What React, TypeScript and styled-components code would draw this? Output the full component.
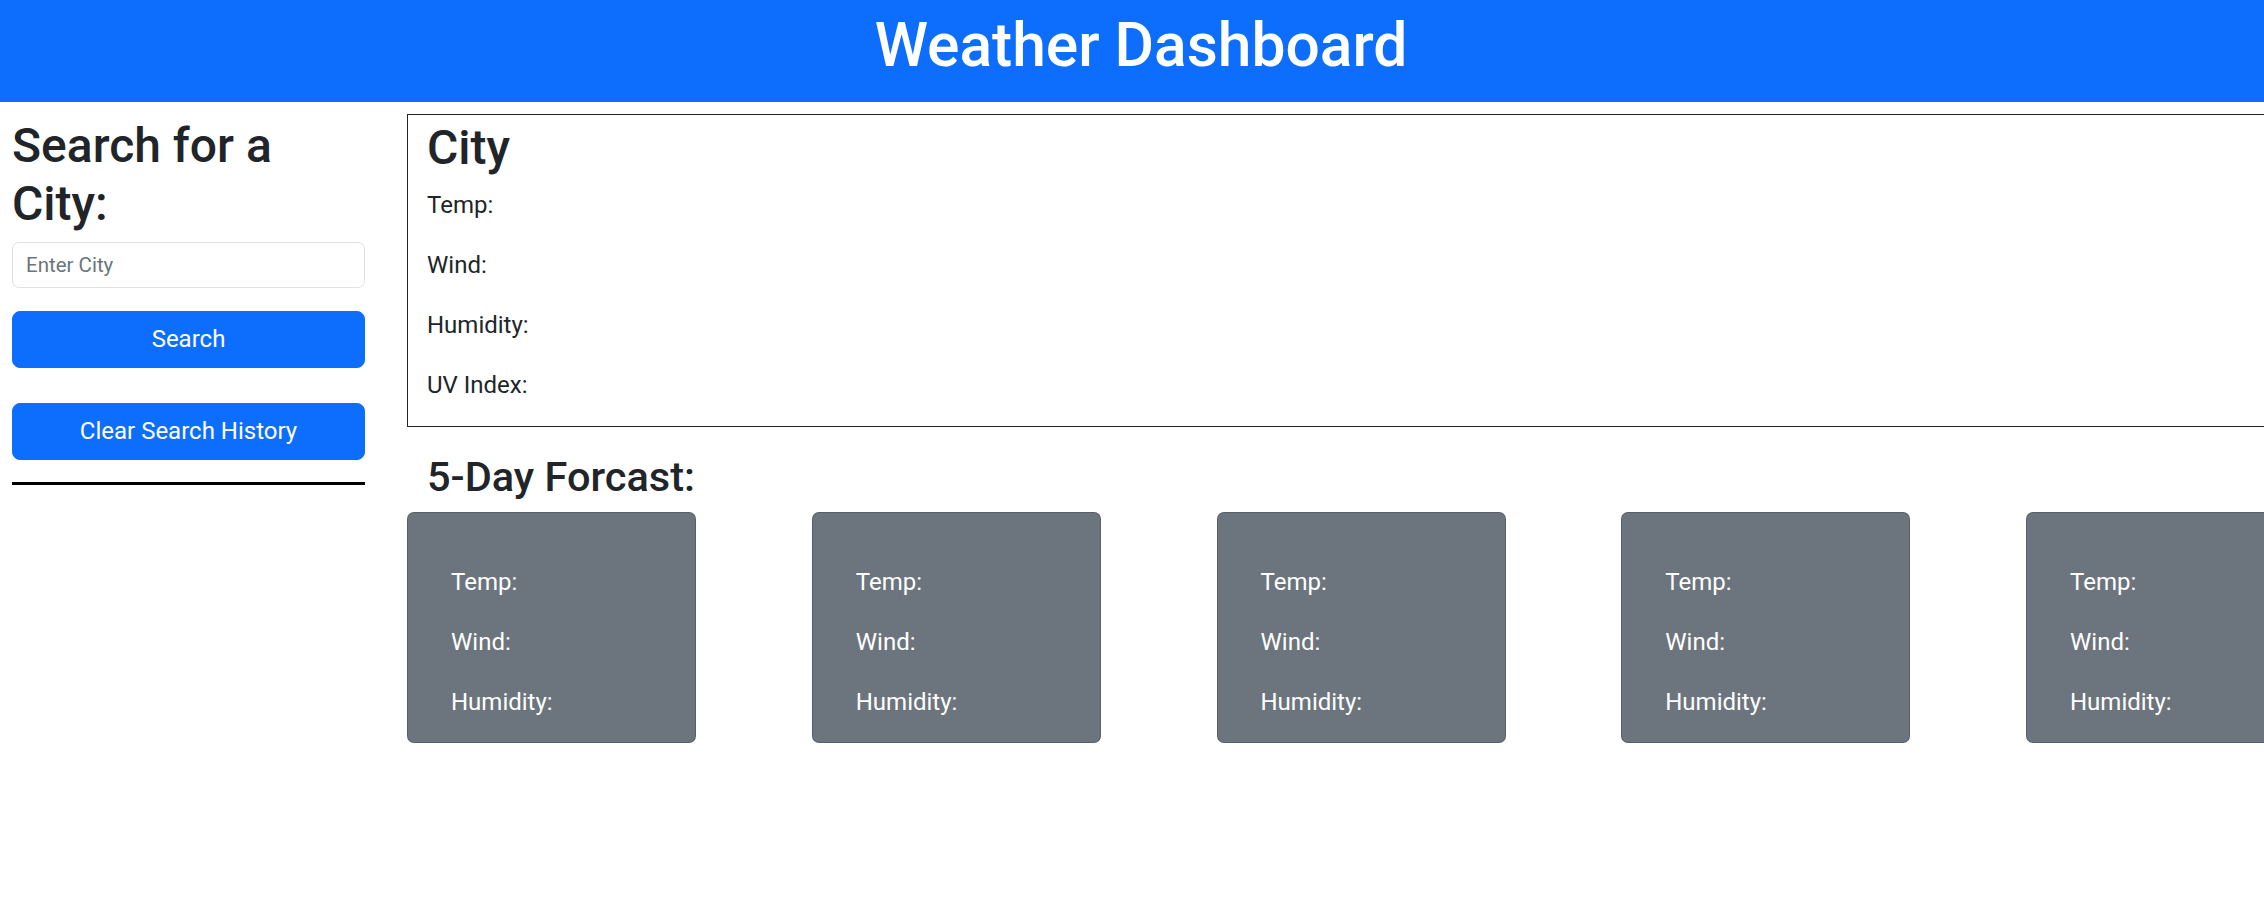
import React from "react";
import styled, { createGlobalStyle } from "styled-components";

const GlobalStyle = createGlobalStyle`
  html, body {
    margin: 0;
    padding: 0;
    overflow-x: hidden;
    background: #ffffff;
  }
  body {
    font-family: Roboto, "Noto Sans", "Liberation Sans", sans-serif;
    color: #212529;
  }
  * { box-sizing: border-box; }
`;

const Header = styled.header`
  background: #0d6efd;
  height: 102px;
  display: flex;
  justify-content: center;
  padding: 11px 0 0 18px;
`;

const Title = styled.h1`
  margin: 0;
  color: #ffffff;
  font-size: 60.5px;
  line-height: 70px;
  font-weight: 500;
`;

const Content = styled.div`
  display: flex;
  align-items: flex-start;
  padding-left: 12px;
`;

const Sidebar = styled.aside`
  width: 353px;
  flex: none;
  display: flex;
  flex-direction: column;
  padding-top: 15px;
`;

const SideHeading = styled.h1`
  margin: 0 0 9.6px;
  font-size: 48px;
  line-height: 57.6px;
  font-weight: 500;
`;

const CityInput = styled.input`
  height: 46px;
  width: 100%;
  border: 1px solid #dee2e6;
  border-radius: 7px;
  padding: 0 13px;
  font-family: inherit;
  font-size: 20.5px;
  color: #212529;
  &::placeholder { color: #6c757d; }
`;

const ActionButton = styled.button<{ $top: number }>`
  margin-top: ${(p) => p.$top}px;
  height: 57px;
  width: 100%;
  border: 1px solid #0d6efd;
  border-radius: 8px;
  background: #0d6efd;
  color: #ffffff;
  font-family: inherit;
  font-size: 24px;
  font-weight: 400;
  line-height: 36px;
`;

const Divider = styled.hr`
  margin: 22px 0 0;
  border: none;
  border-top: 3px solid #000000;
  opacity: 1;
`;

const Main = styled.main`
  flex: none;
  width: 1950px;
  margin-left: 42px;
  padding-top: 12px;
`;

const CurrentBox = styled.section`
  border: 1px solid #212529;
  padding: 4px 19px 0;
  height: 313px;
`;

const CityHeading = styled.h1`
  margin: 0 0 10px;
  font-size: 48px;
  line-height: 57.6px;
  font-weight: 500;
`;

const Stat = styled.p<{ $light?: boolean }>`
  margin: 0 0 24px;
  font-size: 24px;
  line-height: 36px;
  color: ${(p) => (p.$light ? "#ffffff" : "#212529")};
`;

const ForecastHeading = styled.h2`
  margin: 26px 0 12px;
  padding-left: 20px;
  font-size: 41.5px;
  line-height: 47px;
  font-weight: 500;
`;

const CardRow = styled.div`
  display: flex;
  gap: 115.75px;
`;

const Card = styled.div`
  flex: none;
  width: 289px;
  height: 231px;
  background: #6c757d;
  border: 1px solid rgba(0, 0, 0, 0.175);
  border-radius: 7px;
  padding: 51px 0 0 43px;
`;

const stats = ["Temp:", "Wind:", "Humidity:", "UV Index:"];
const cardStats = ["Temp:", "Wind:", "Humidity:"];

export default function App() {
  return (
    <>
      <GlobalStyle />
      <Header>
        <Title>Weather Dashboard</Title>
      </Header>
      <Content>
        <Sidebar>
          <SideHeading>
            Search for a
            <br />
            City:
          </SideHeading>
          <CityInput placeholder="Enter City" />
          <ActionButton $top={23}>Search</ActionButton>
          <ActionButton $top={35}>Clear Search History</ActionButton>
          <Divider />
        </Sidebar>
        <Main>
          <CurrentBox>
            <CityHeading>City</CityHeading>
            {stats.map((s) => (
              <Stat key={s}>{s}</Stat>
            ))}
          </CurrentBox>
          <ForecastHeading>5-Day Forcast:</ForecastHeading>
          <CardRow>
            {[0, 1, 2, 3, 4].map((i) => (
              <Card key={i}>
                {cardStats.map((s) => (
                  <Stat key={s} $light>
                    {s}
                  </Stat>
                ))}
              </Card>
            ))}
          </CardRow>
        </Main>
      </Content>
    </>
  );
}
